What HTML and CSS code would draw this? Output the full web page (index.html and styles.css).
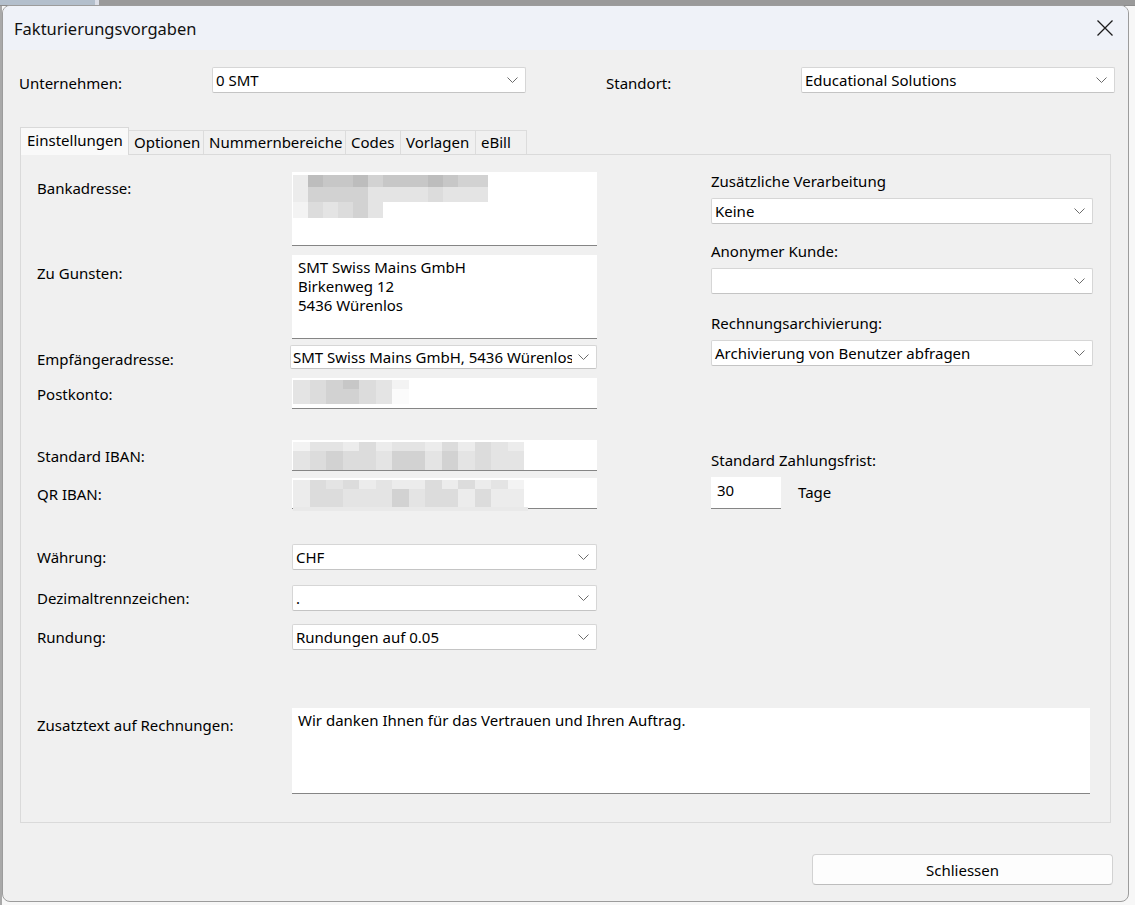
FILE: index.html
```html
<!DOCTYPE html>
<html lang="de">
<head>
  <meta charset="UTF-8">
  <meta name="viewport" content="width=device-width, initial-scale=1.0">
  <title>Fakturierungsvorgaben</title>
  <link rel="stylesheet" href="styles.css">
</head>
<body>
  <div class="backdrop"></div>

  <div class="window">
    <!-- Titelleiste -->
    <div class="titlebar">
      <span class="title">Fakturierungsvorgaben</span>
      <svg class="close" width="16" height="16" viewBox="0 0 16 16">
        <path d="M0.5 0.5 L15.5 15.5 M15.5 0.5 L0.5 15.5" stroke="#1c1c1c" stroke-width="1.3" fill="none"/>
      </svg>
    </div>

    <!-- Unternehmen / Standort -->
    <div class="top-row">
      <span class="top-label">Unternehmen:</span>
      <div class="combo combo-company"><span>0 SMT</span><svg class="chev" width="11" height="6" viewBox="0 0 11 6"><path d="M0.5 0.5 L5.5 5.5 L10.5 0.5" stroke="#6b6b6b" fill="none"/></svg></div>
      <span class="top-label top-label-site">Standort:</span>
      <div class="combo combo-site"><span>Educational Solutions</span><svg class="chev" width="11" height="6" viewBox="0 0 11 6"><path d="M0.5 0.5 L5.5 5.5 L10.5 0.5" stroke="#6b6b6b" fill="none"/></svg></div>
    </div>

    <!-- Reiter -->
    <div class="tabs">
      <div class="tab active tab-settings">Einstellungen</div>
      <div class="tab tab-options">Optionen</div>
      <div class="tab tab-numbers">Nummernbereiche</div>
      <div class="tab tab-codes">Codes</div>
      <div class="tab tab-templates">Vorlagen</div>
      <div class="tab tab-ebill">eBill</div>
    </div>

    <div class="panel">
      <div class="panel-cols">
        <!-- linke Spalte -->
        <div class="form-left">
          <div class="row row-top">
            <span class="label lbl-bank">Bankadresse:</span>
            <div class="textbox box-bank">
              <div class="mosaic">
                <div class="mrow h12"><i class="t6"></i><i class="t1"></i><i class="t2"></i><i class="t2"></i><i class="t1"></i><i class="t3"></i><i class="t2"></i><i class="t2"></i><i class="t2"></i><i class="t1"></i><i class="t2"></i><i class="t3"></i><i class="t3"></i></div>
                <div class="mrow h15"><i class="t6"></i><i class="t3"></i><i class="t3"></i><i class="t3"></i><i class="t3"></i><i class="t5"></i><i class="t5"></i><i class="t5"></i><i class="t5"></i><i class="t4"></i><i class="t5"></i><i class="t5"></i><i class="t5"></i></div>
                <div class="mrow h16"><i class="t7"></i><i class="t4"></i><i class="t5"></i><i class="t4"></i><i class="t3"></i><i class="t5"></i></div>
              </div>
            </div>
          </div>

          <div class="row row-top gap-9">
            <span class="label lbl-gunst">Zu Gunsten:</span>
            <div class="textbox box-gunst">SMT Swiss Mains GmbH<br>Birkenweg 12<br>5436 Würenlos</div>
          </div>

          <div class="row gap-6">
            <span class="label lbl-low">Empfängeradresse:</span>
            <div class="combo combo-recv"><span class="clip">SMT Swiss Mains GmbH, 5436 Würenlos</span><svg class="chev" width="11" height="6" viewBox="0 0 11 6"><path d="M0.5 0.5 L5.5 5.5 L10.5 0.5" stroke="#6b6b6b" fill="none"/></svg></div>
          </div>

          <div class="row gap-9">
            <span class="label">Postkonto:</span>
            <div class="textbox box-line">
              <div class="mosaic m-small">
                <div class="mrow h9"><i class="t5"></i><i class="t4"></i><i class="t3"></i><i class="t2"></i><i class="t4"></i><i class="t5"></i><i class="t7"></i></div>
                <div class="mrow h15"><i class="t5"></i><i class="t4"></i><i class="t3"></i><i class="t3"></i><i class="t4"></i><i class="t5"></i><i class="t8"></i></div>
              </div>
            </div>
          </div>

          <div class="row gap-31">
            <span class="label">Standard IBAN:</span>
            <div class="textbox box-line">
              <div class="mosaic m-small">
                <div class="mrow h9"><i class="t7"></i><i class="t5"></i><i class="t5"></i><i class="t6"></i><i class="t4"></i><i class="t6"></i><i class="t5"></i><i class="t5"></i><i class="t6"></i><i class="t4"></i><i class="t6"></i><i class="t4"></i><i class="t5"></i><i class="t6"></i></div>
                <div class="mrow h19"><i class="t5"></i><i class="t4"></i><i class="t3"></i><i class="t4"></i><i class="t4"></i><i class="t5"></i><i class="t3"></i><i class="t3"></i><i class="t5"></i><i class="t3"></i><i class="t5"></i><i class="t4"></i><i class="t5"></i><i class="t5"></i></div>
              </div>
            </div>
          </div>

          <div class="row gap-7">
            <span class="label">QR IBAN:</span>
            <div class="textbox box-line">
              <div class="mosaic m-small">
                <div class="mrow h9"><i class="t6"></i><i class="t4"></i><i class="t5"></i><i class="t4"></i><i class="t6"></i><i class="t5"></i><i class="t6"></i><i class="t6"></i><i class="t4"></i><i class="t6"></i><i class="t4"></i><i class="t6"></i><i class="t5"></i><i class="t7"></i></div>
                <div class="mrow h18"><i class="t6"></i><i class="t4"></i><i class="t4"></i><i class="t5"></i><i class="t5"></i><i class="t5"></i><i class="t3"></i><i class="t5"></i><i class="t4"></i><i class="t4"></i><i class="t6"></i><i class="t4"></i><i class="t6"></i><i class="t6"></i></div>
                <div class="mrow h4 tail"></div>
              </div>
            </div>
          </div>

          <div class="row gap-36">
            <span class="label">Währung:</span>
            <div class="combo combo-form"><span>CHF</span><svg class="chev" width="11" height="6" viewBox="0 0 11 6"><path d="M0.5 0.5 L5.5 5.5 L10.5 0.5" stroke="#6b6b6b" fill="none"/></svg></div>
          </div>

          <div class="row gap-15">
            <span class="label">Dezimaltrennzeichen:</span>
            <div class="combo combo-form"><span>.</span><svg class="chev" width="11" height="6" viewBox="0 0 11 6"><path d="M0.5 0.5 L5.5 5.5 L10.5 0.5" stroke="#6b6b6b" fill="none"/></svg></div>
          </div>

          <div class="row gap-13">
            <span class="label">Rundung:</span>
            <div class="combo combo-form"><span>Rundungen auf 0.05</span><svg class="chev" width="11" height="6" viewBox="0 0 11 6"><path d="M0.5 0.5 L5.5 5.5 L10.5 0.5" stroke="#6b6b6b" fill="none"/></svg></div>
          </div>
        </div>

        <!-- rechte Spalte -->
        <div class="form-right">
          <span class="label rl-1">Zusätzliche Verarbeitung</span>
          <div class="combo combo-right"><span>Keine</span><svg class="chev" width="11" height="6" viewBox="0 0 11 6"><path d="M0.5 0.5 L5.5 5.5 L10.5 0.5" stroke="#6b6b6b" fill="none"/></svg></div>

          <span class="label rl-2">Anonymer Kunde:</span>
          <div class="combo combo-right"><span></span><svg class="chev" width="11" height="6" viewBox="0 0 11 6"><path d="M0.5 0.5 L5.5 5.5 L10.5 0.5" stroke="#6b6b6b" fill="none"/></svg></div>

          <span class="label rl-3">Rechnungsarchivierung:</span>
          <div class="combo combo-right"><span>Archivierung von Benutzer abfragen</span><svg class="chev" width="11" height="6" viewBox="0 0 11 6"><path d="M0.5 0.5 L5.5 5.5 L10.5 0.5" stroke="#6b6b6b" fill="none"/></svg></div>

          <span class="label rl-4">Standard Zahlungsfrist:</span>
          <div class="days-row">
            <div class="textbox box-days">30</div>
            <span class="label">Tage</span>
          </div>
        </div>
      </div>

      <!-- Zusatztext -->
      <div class="row row-top row-note">
        <span class="label lbl-note">Zusatztext auf Rechnungen:</span>
        <div class="textbox box-note">Wir danken Ihnen für das Vertrauen und Ihren Auftrag.</div>
      </div>
    </div>

    <div class="footer">
      <div class="button">Schliessen</div>
    </div>
  </div>
</body>
</html>
```

FILE: styles.css
```css
* {
  box-sizing: border-box;
}

body {
  margin: 0;
  background: linear-gradient(to right, #a9a9a9 0, #a9a9a9 2px, #f7f7f7 2px);
  font-family: "Noto Sans", "Open Sans", sans-serif;
  font-size: 15px;
  color: #000;
  height: 905px;
  overflow: hidden;
}

/* Hintergrund oberhalb des Fensters */
.backdrop {
  height: 6px;
  background: linear-gradient(to right, #b3bfcc 0, #b3bfcc 95px, #dcdfe8 95px, #dcdfe8 99px, #9a9a9a 99px);
  border-bottom: 1px solid #8c8c8c;
}

.window {
  width: 1127px;
  height: 897px;
  margin-left: 2px;
  margin-top: -1px;
  background: #f0f0f0;
  border: 1px solid #9c9c9c;
  border-radius: 8px;
  overflow: hidden;
  display: flex;
  flex-direction: column;
}

/* Titelleiste */
.titlebar {
  height: 44px;
  flex-shrink: 0;
  background: #eff2f8;
  display: flex;
  align-items: center;
  justify-content: space-between;
  padding: 0 15px 0 11px;
}
.titlebar .title {
  font-size: 16.5px;
  color: #111;
}

/* Unternehmen / Standort */
.top-row {
  display: flex;
  align-items: center;
  margin-top: 17px;
  padding-left: 16px;
  height: 26px;
}
.top-label {
  width: 193px;
  padding-top: 5px;
}
.top-label-site {
  width: 195px;
  margin-left: 80px;
}

/* Combobox */
.combo {
  display: flex;
  align-items: center;
  justify-content: space-between;
  background: #fff;
  border: 1px solid #d6d6d6;
  border-bottom-color: #c4c4c4;
  border-radius: 2px;
  padding: 0 7px 0 3px;
  white-space: nowrap;
  overflow: hidden;
}
.combo .chev {
  flex-shrink: 0;
  margin-left: 6px;
}
.combo .clip {
  overflow: hidden;
  flex: 1;
}
.combo-company {
  width: 314px;
  height: 26px;
}
.combo-site {
  width: 314px;
  height: 26px;
}
.combo-recv {
  width: 307px;
  height: 24px;
  margin-left: -2px;
  padding-left: 2px;
}
.combo-form {
  width: 305px;
  height: 26px;
}
.combo-right {
  width: 382px;
  height: 26px;
}

/* Reiter */
.tabs {
  display: flex;
  align-items: flex-end;
  margin-top: 34px;
  margin-left: 17px;
  height: 27px;
}
.tab {
  height: 24px;
  line-height: 22px;
  padding: 0 0 0 5px;
  border: 1px solid #dcdcdc;
  border-bottom: none;
  border-left: none;
  background: #f0f0f0;
  white-space: nowrap;
}
.tab.active {
  height: 28px;
  line-height: 24px;
  margin-bottom: -1px;
  padding: 0 0 0 6px;
  background: #f9f9f9;
  border-color: #d9d9d9;
  border-left: 1px solid #d9d9d9;
  position: relative;
  z-index: 1;
}
.tab-settings { width: 109px; }
.tab-options { width: 75px; }
.tab-numbers { width: 142px; }
.tab-codes { width: 55px; }
.tab-templates { width: 75px; }
.tab-ebill { width: 51px; }

.panel {
  margin: 0 17px 0 17px;
  height: 669px;
  border: 1px solid #dadada;
  padding: 17px 0 0 16px;
}

.panel-cols {
  display: flex;
}

.form-left {
  width: 559px;
}
.form-right {
  margin-left: 115px;
  width: 382px;
  display: flex;
  flex-direction: column;
  align-items: flex-start;
}

/* Zeilen */
.row {
  display: grid;
  grid-template-columns: 255px 305px;
  align-items: center;
}
.row-top {
  align-items: start;
}
.gap-6 { margin-top: 6px; }
.gap-7 { margin-top: 7px; }
.gap-9 { margin-top: 9px; }
.gap-13 { margin-top: 13px; }
.gap-15 { margin-top: 15px; }
.gap-31 { margin-top: 31px; }
.gap-36 { margin-top: 35px; }

.label {
  line-height: 20px;
  white-space: nowrap;
}
.lbl-bank { padding-top: 6px; }
.lbl-gunst { padding-top: 8px; }
.lbl-note { padding-top: 7px; }
.lbl-low { padding-top: 4px; }

/* Textfelder */
.textbox {
  background: #fff;
  border-bottom: 1px solid #858585;
  line-height: 19px;
  padding: 2px 6px;
}
.box-bank {
  height: 74px;
  padding: 3px 1px;
}
.box-gunst {
  height: 84px;
  padding-top: 3px;
}
.box-line {
  height: 31px;
  padding: 2px 1px;
}
.box-days {
  width: 70px;
  height: 32px;
  padding-top: 4px;
}
.box-note {
  height: 86px;
  width: 798px;
  padding-top: 3px;
}

/* verpixelte Inhalte */
.mosaic {
  display: flex;
  flex-direction: column;
}
.mrow {
  display: flex;
}
.mrow i {
  width: 15px;
}
.m-small .mrow i {
  width: 16.5px;
}
.h4 { height: 4px; }
.h9 { height: 9px; }
.h12 { height: 12px; }
.h15 { height: 15px; }
.h16 { height: 16px; }
.h18 { height: 18px; }
.h19 { height: 19px; }
.tail {
  width: 235px;
  background: #e9e9e9;
}
.t1 { background: #bdbdbd; }
.t2 { background: #c7c7c7; }
.t3 { background: #d2d2d2; }
.t4 { background: #dcdcdc; }
.t5 { background: #e4e4e4; }
.t6 { background: #ececec; }
.t7 { background: #f3f3f3; }
.t8 { background: #fbfbfb; }

/* rechte Spalte */
.rl-1 { margin-top: -1px; }
.rl-2 { margin-top: 17px; }
.rl-3 { margin-top: 19px; }
.rl-4 { margin-top: 84px; }
.form-right .combo {
  margin-top: 7px;
}
.days-row {
  display: flex;
  align-items: center;
  margin-top: 7px;
}
.days-row .label {
  margin-left: 17px;
  margin-top: -2px;
}

.row-note {
  grid-template-columns: 255px 798px;
  margin-top: 58px;
}

/* Schaltflaeche */
.footer {
  display: flex;
  justify-content: flex-end;
  padding: 31px 15px 0 0;
}
.button {
  width: 301px;
  height: 31px;
  background: #fdfdfd;
  border: 1px solid #d2d2d2;
  border-bottom-color: #bdbdbd;
  border-radius: 4px;
  display: flex;
  align-items: center;
  justify-content: center;
}
```
